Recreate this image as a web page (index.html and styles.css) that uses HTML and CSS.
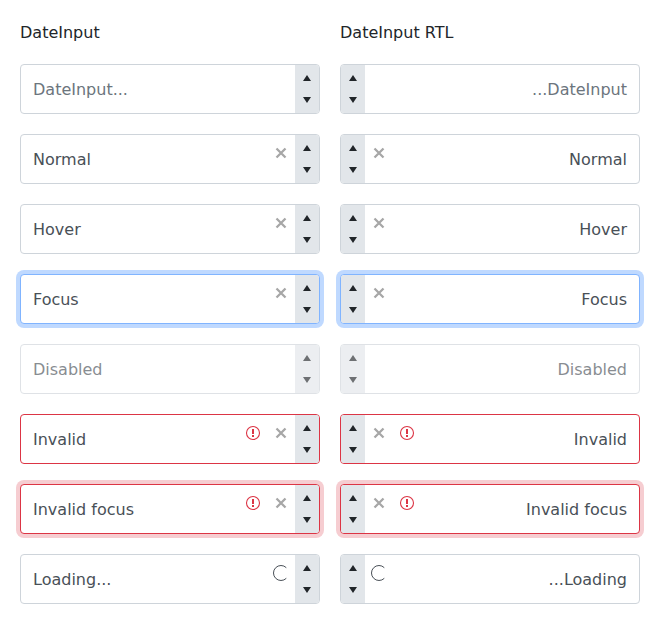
FILE: index.html
```html
<!DOCTYPE html>
<html lang="en">
<head>
<meta charset="utf-8">
<title>DateInput</title>
<link rel="stylesheet" href="styles.css">
</head>
<body>
<main class="columns" id="columns"></main>
<script src="script.js"></script>
</body>
</html>
```
FILE: styles.css
```css
* { box-sizing: border-box; }
body {
  margin: 0;
  background: #fff;
  color: #212529;
  font: 16px/24px "DejaVu Sans", sans-serif;
}
.columns {
  display: grid;
  grid-template-columns: 300px 300px;
  gap: 20px;
  padding: 20px;
}
.column { display: flex; flex-direction: column; gap: 20px; }
.title { height: 24px; margin: 0; padding-top: 1px; font-size: 16px; font-weight: 400; }
.input {
  display: flex;
  height: 50px;
  border: 1px solid #ced4da;
  border-radius: 4px;
  background: #fff;
  color: #495057;
}
.rtl { direction: rtl; }
.value { flex: 1; padding: 13px 12px 11px; }
.placeholder { color: #6c757d; }
.icon { width: 28px; height: 36px; }
.icon svg, .spin svg { display: block; }
.spin { width: 24px; height: 48px; background: #e2e6ea; border-radius: 0 3px 3px 0; }
.rtl .spin { border-radius: 3px 0 0 3px; }
.focus { border-color: #80b4ff; box-shadow: 0 0 0 4px #bfd9ff; }
.disabled { opacity: .65; }
.invalid { border-color: #dc3545; }
.invalid.focus { box-shadow: 0 0 0 4px #f6cdd1; }
```
FILE: script.js
```js
const svg = (w, h, body) => `<svg width="${w}" height="${h}" viewBox="0 0 ${w} ${h}">${body}</svg>`;
const icons = {
  clear: svg(28, 36, '<path d="M9.5 13.5l9 9M18.5 13.5l-9 9" stroke="#a7a7a7" stroke-width="2.3"/>'),
  alert: svg(28, 36, '<circle cx="14" cy="18" r="6.5" fill="none" stroke="#dc3545" stroke-width="1.1"/><path d="M14 14v5M14 20v2" stroke="#dc3545" stroke-width="2"/>'),
  loader: svg(28, 36, '<path d="M19.3 12.7A7.5 7.5 0 1 0 19.3 23.3" fill="none" stroke="#495057"/>')
};
const spin = svg(24, 48, '<path d="M8 16h8l-4-6zM8 32h8l-4 6z" fill="#212529"/>');
const rows = [
  ['DateInput...', 'placeholder', '', []],
  ['Normal', '', '', ['clear']],
  ['Hover', '', '', ['clear']],
  ['Focus', '', 'focus', ['clear']],
  ['Disabled', '', 'disabled', []],
  ['Invalid', '', 'invalid', ['alert', 'clear']],
  ['Invalid focus', '', 'invalid focus', ['alert', 'clear']],
  ['Loading...', '', '', ['loader']]
];
const column = (title, dir) => `<section class="column"><h2 class="title">${title}</h2>` +
  rows.map(([text, tone, state, list]) =>
    `<div class="input ${dir} ${state}"><div class="value ${tone}">${text}</div>` +
    list.map(name => `<div class="icon">${icons[name]}</div>`).join('') +
    `<div class="spin">${spin}</div></div>`).join('') + '</section>';
document.getElementById('columns').innerHTML = column('DateInput', '') + column('DateInput RTL', 'rtl');
```
